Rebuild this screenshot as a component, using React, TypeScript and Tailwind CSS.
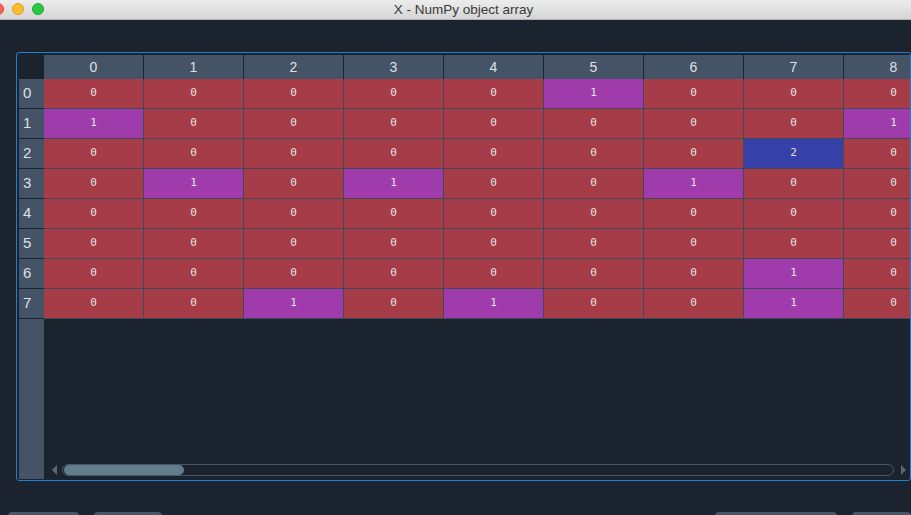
import React from "react";

const data: number[][] = [
  [0, 0, 0, 0, 0, 1, 0, 0, 0],
  [1, 0, 0, 0, 0, 0, 0, 0, 1],
  [0, 0, 0, 0, 0, 0, 0, 2, 0],
  [0, 1, 0, 1, 0, 0, 1, 0, 0],
  [0, 0, 0, 0, 0, 0, 0, 0, 0],
  [0, 0, 0, 0, 0, 0, 0, 0, 0],
  [0, 0, 0, 0, 0, 0, 0, 1, 0],
  [0, 0, 1, 0, 1, 0, 0, 1, 0],
];

const cellColor = (v: number) =>
  v === 2 ? "bg-[#3540a8]" : v === 1 ? "bg-[#9f3bab]" : "bg-[#a53c48]";

function TitleBar() {
  return (
    <div className="relative h-[20px] shrink-0 border-b border-[#b4b4b4] bg-gradient-to-b from-[#ececec] to-[#d5d5d5]">
      <div className="absolute left-[-8px] top-[3px] flex gap-[8px]">
        <span className="h-[12px] w-[12px] rounded-full bg-[#fc5f57] border border-[#de4a42]" />
        <span className="h-[12px] w-[12px] rounded-full bg-[#fdbc2e] border border-[#dea025]" />
        <span className="h-[12px] w-[12px] rounded-full bg-[#28c840] border border-[#1ea932]" />
      </div>
      <div
        className="pl-[16px] text-center text-[13.5px] leading-[19px] text-[#3a3a3a]"
        style={{ fontFamily: '"Liberation Sans", Arial, sans-serif' }}
      >
        X - NumPy object array
      </div>
    </div>
  );
}

function Scrollbar() {
  return (
    <div className="flex h-[14px] items-center pl-[8px] pr-[4px]">
      <div className="h-0 w-0 border-y-[5px] border-r-[5px] border-y-transparent border-r-[#5a6676]" />
      <div className="ml-[5px] flex h-[12px] w-[832px] items-center rounded-full border border-[#4b5565] px-px">
        <div className="h-[10px] w-[120px] rounded-full bg-[#627d8e]" />
      </div>
      <div className="ml-[7px] h-0 w-0 border-y-[5px] border-l-[5px] border-y-transparent border-l-[#5a6676]" />
    </div>
  );
}

export default function App() {
  const sans = { fontFamily: '"Liberation Sans", Arial, sans-serif' };
  const mono = { fontFamily: '"DejaVu Sans Mono", "Liberation Mono", monospace' };
  return (
    <div className="flex h-[515px] w-[911px] flex-col overflow-hidden bg-[#1b232e]">
      <TitleBar />
      <div className="mt-[32px] ml-[16px] flex h-[429px] w-[895px] shrink-0 overflow-hidden rounded-[3px] border border-[#1f7fd0] pt-[2px] pl-[2px]">
        {/* row index column */}
        <div className="flex w-[25px] shrink-0 flex-col" style={sans}>
          <div className="h-[24px] shrink-0" />
          <div className="mb-[1px] flex-1 bg-[#455366]">
            {data.map((_, i) => (
              <div
                key={i}
                className="flex h-[30px] items-center border-b border-[#1b232e] pl-[4px] text-[15px] text-[#dde1e6]"
              >
                {i}
              </div>
            ))}
          </div>
        </div>
        {/* table */}
        <div className="flex min-w-0 flex-1 flex-col overflow-hidden">
          <div className="flex h-[24px] shrink-0" style={sans}>
            {data[0].map((_, j) => (
              <div
                key={j}
                className="flex h-[24px] w-[100px] shrink-0 items-center justify-center border-r border-[#1b232e] bg-[#455366] text-[14px] text-[#dde1e6]"
              >
                {j}
              </div>
            ))}
          </div>
          {data.map((row, i) => (
            <div key={i} className="flex h-[30px] shrink-0" style={mono}>
              {row.map((v, j) => (
                <div
                  key={j}
                  className={`flex h-[30px] w-[100px] shrink-0 items-center justify-center border-r border-b border-[#3e4a5a] text-[11px] text-[#e4e4e4] ${cellColor(v)}`}
                >
                  {v}
                </div>
              ))}
            </div>
          ))}
          <div className="flex-1" />
          <Scrollbar />
          <div className="h-[3px] shrink-0" />
        </div>
      </div>
      <div className="mt-[31px] flex shrink-0">
        <div className="ml-[8px] h-[10px] w-[72px] rounded-[4px] bg-[#4a5566]" />
        <div className="ml-[15px] h-[10px] w-[69px] rounded-[4px] bg-[#4a5566]" />
        <div className="ml-[553px] h-[10px] w-[123px] rounded-[4px] bg-[#4a5566]" />
        <div className="ml-[15px] h-[10px] w-[60px] rounded-[4px] bg-[#4a5566]" />
      </div>
    </div>
  );
}
